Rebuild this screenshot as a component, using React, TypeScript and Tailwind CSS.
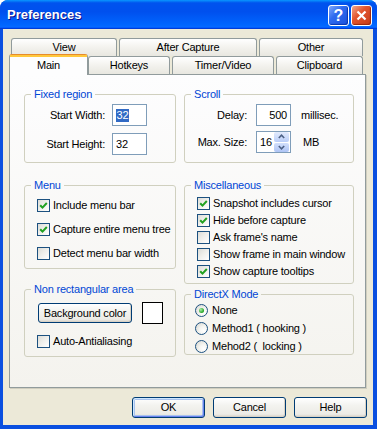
import React from "react";

const Check = ({ on }: { on?: boolean }) => (
  <span className="flex h-[13px] w-[13px] shrink-0 items-center justify-center border border-[#1C5180] bg-[linear-gradient(135deg,#DCDCD7_0%,#EEEEEA_45%,#FFFFFF_100%)]">
    {on && (
      <svg width="9" height="9" viewBox="0 0 9 9">
        <path d="M1.2 4.2 L3.5 6.6 L7.8 2" fill="none" stroke="#21A121" strokeWidth="2" />
      </svg>
    )}
  </span>
);

const CheckRow = ({ on, label }: { on?: boolean; label: string }) => (
  <div className="flex h-[13px] items-center gap-[3px]">
    <Check on={on} />
    <span className="whitespace-pre">{label}</span>
  </div>
);

const Radio = ({ on, label }: { on?: boolean; label: string }) => (
  <div className="flex h-[13px] items-center gap-[4px]">
    <span className="flex h-[13px] w-[13px] shrink-0 items-center justify-center rounded-full border border-[#1C5180] bg-[radial-gradient(circle_at_70%_70%,#FFFFFF_0%,#F4F4F0_40%,#D4D4CE_100%)]">
      {on && (
        <span className="h-[5px] w-[5px] rounded-full bg-[radial-gradient(circle_at_35%_35%,#A8F0A8,#21A121_70%)]" />
      )}
    </span>
    <span className="whitespace-pre">{label}</span>
  </div>
);

const Group = ({
  title,
  className,
  children,
}: {
  title: string;
  className?: string;
  children: React.ReactNode;
}) => (
  <fieldset className={"min-w-0 rounded-[3px] border border-[#D0D0BF] " + (className ?? "")}>
    <legend className="ml-[6px] px-[3px] leading-[13px] text-[#0046D5]">{title}</legend>
    {children}
  </fieldset>
);

const Tab = ({ label, w }: { label: string; w: string }) => (
  <div
    className={
      "flex h-[18px] items-center justify-center rounded-t-[3px] border border-b-0 border-[#919B9C] bg-[linear-gradient(180deg,#FFFFFF,#F4F3EF_45%,#E8E7E0)] " +
      w
    }
  >
    {label}
  </div>
);

const XPButton = ({ label, def, w }: { label: string; def?: boolean; w: string }) => (
  <div
    className={
      "flex items-center justify-center rounded-[3px] border border-[#003C74] bg-[linear-gradient(180deg,#FFFFFF,#F3F3EF_40%,#ECEBE6_85%,#D6D0C5)] " +
      w +
      (def
        ? " shadow-[inset_1px_1px_0_#CEE7FF,inset_-1px_-1px_0_#6982EE,inset_0_0_0_2px_#A9C3EE]"
        : " shadow-[inset_-1px_-1px_0_#D8D2C6]")
    }
  >
    {label}
  </div>
);

const Arrow = ({ up }: { up?: boolean }) => (
  <svg width="7" height="5" viewBox="0 0 7 5">
    <path
      d={up ? "M0.8 4 L3.5 1.2 L6.2 4" : "M0.8 1 L3.5 3.8 L6.2 1"}
      fill="none"
      stroke="#4D6185"
      strokeWidth="1.6"
    />
  </svg>
);

export default function App() {
  return (
    <div className="flex h-[429px] w-[377px] flex-col overflow-hidden rounded-t-[8px] bg-[#0A4FE0] font-['Liberation_Sans',Arial,sans-serif] text-[11px] leading-[13px] tracking-[-0.2px] text-black">
      {/* Title bar */}
      <div className="flex h-[29px] shrink-0 items-center bg-[linear-gradient(180deg,#0997FF,#0053EE_10%,#0050EE_40%,#0066FF_86%,#066AFF_92%,#005BFF_95%,#003DD7_97%,#003DD7)] pl-[7px] pr-[5px]">
        <span className="text-[13px] font-bold tracking-[0px] text-white [text-shadow:1px_1px_0_#0F1089]">
          Preferences
        </span>
        <div className="ml-auto mt-[2px] flex gap-[2px]">
          <div className="flex h-[21px] w-[21px] items-center justify-center rounded-[3px] border border-white bg-[linear-gradient(135deg,#7FA8FA,#2F6BEF_40%,#1A50DC_100%)] shadow-[inset_-1px_-1px_1px_#0A37B0]">
            <span className="text-[16px] font-bold leading-none tracking-[0px] text-white">?</span>
          </div>
          <div className="flex h-[21px] w-[21px] items-center justify-center rounded-[3px] border border-white bg-[linear-gradient(135deg,#F2A88F,#E2552E_40%,#C63A18_100%)] shadow-[inset_-1px_-1px_1px_#9A2A10]">
            <svg width="11" height="11" viewBox="0 0 11 11">
              <path d="M1.5 1.5 L9.5 9.5 M9.5 1.5 L1.5 9.5" stroke="white" strokeWidth="2.2" />
            </svg>
          </div>
        </div>
      </div>

      {/* Body */}
      <div className="mb-[4px] ml-[3px] mr-[4px] flex flex-1 flex-col bg-[#ECE9D8] pl-[6px] pr-[6px] pt-[9px]">
        {/* Tabs row 1 */}
        <div className="ml-[2px] flex gap-[2px]">
          <Tab label="View" w="w-[106px]" />
          <Tab label="After Capture" w="w-[138px]" />
          <Tab label="Other" w="w-[104px]" />
        </div>
        {/* Tabs row 2 */}
        <div className="flex h-[18px] items-end">
          <div className="relative z-10 -mb-[1px] flex h-[21px] w-[79px] flex-col rounded-t-[3px] border-x border-t border-[#919B9C] border-t-[#E68B2C] bg-[#FDFDFE]">
            <div className="h-[2px] bg-[#FFC83C]" />
            <div className="flex flex-1 items-center justify-center pb-[2px]">Main</div>
          </div>
          <div className="flex h-[18px] gap-[2px]">
            <Tab label="Hotkeys" w="w-[82px]" />
            <Tab label="Timer/Video" w="w-[102px]" />
            <Tab label="Clipboard" w="w-[87px]" />
          </div>
        </div>

        {/* Panel */}
        <div className="flex h-[314px] w-[357px] gap-[8px] border border-[#919B9C] bg-[linear-gradient(180deg,#FDFDFE,#F4F3EE)] pl-[14px] pt-[13px] shadow-[1px_1px_0_#D0CEBF]">
          {/* Left column */}
          <div className="flex w-[152px] flex-col">
            <Group title="Fixed region" className="pb-[7px]">
              <div className="flex flex-col gap-[7px] pt-[3px]">
                <div className="flex items-center">
                  <span className="w-[80px] text-right">Start Width:</span>
                  <div className="ml-[7px] flex h-[22px] w-[35px] items-center border border-[#7F9DB9] bg-white pl-[3px]">
                    <span className="bg-[#316AC5] px-[0.5px] text-white">32</span>
                  </div>
                </div>
                <div className="flex items-center">
                  <span className="w-[80px] text-right">Start Height:</span>
                  <div className="ml-[7px] flex h-[22px] w-[35px] items-center border border-[#7F9DB9] bg-white pl-[3px]">
                    32
                  </div>
                </div>
              </div>
            </Group>

            <Group title="Menu" className="mt-[16px] pb-[8px]">
              <div className="flex flex-col gap-[11px] pl-[12px] pt-[7px]">
                <CheckRow on label="Include menu bar" />
                <CheckRow on label="Capture entire menu tree" />
                <CheckRow label="Detect menu bar width" />
              </div>
            </Group>

            <Group title="Non rectangular area" className="mt-[14px] pb-[8px]">
              <div className="pt-[6px]">
                <div className="flex h-[22px] items-center">
                  <XPButton label="Background color" w="ml-[13px] h-[20px] w-[94px]" />
                  <div className="ml-[10px] h-[22px] w-[21px] border border-black bg-white" />
                </div>
                <div className="mt-[11px] pl-[12px]">
                  <CheckRow label="Auto-Antialiasing" />
                </div>
              </div>
            </Group>
          </div>

          {/* Right column */}
          <div className="flex w-[170px] flex-col">
            <Group title="Scroll" className="pb-[9px]">
              <div className="flex flex-col gap-[5px] pt-[3px]">
                <div className="flex items-center">
                  <span className="w-[62px] text-right">Delay:</span>
                  <div className="ml-[9px] flex h-[22px] w-[35px] items-center justify-end border border-[#7F9DB9] bg-white pr-[3px]">
                    500
                  </div>
                  <span className="ml-[10px]">millisec.</span>
                </div>
                <div className="flex items-center">
                  <span className="w-[62px] text-right">Max. Size:</span>
                  <div className="ml-[9px] flex h-[22px] w-[35px] items-center border border-[#7F9DB9] bg-white pl-[3px]">
                    <span>16</span>
                    <div className="ml-auto mr-[1px] flex h-[20px] w-[15px] flex-col gap-[1px]">
                      <div className="flex flex-1 items-center justify-center rounded-[2px] bg-[linear-gradient(180deg,#E3EBFD,#B9CDF8)]">
                        <Arrow up />
                      </div>
                      <div className="flex flex-1 items-center justify-center rounded-[2px] bg-[linear-gradient(180deg,#D2DFFB,#AFC5F6)]">
                        <Arrow />
                      </div>
                    </div>
                  </div>
                  <span className="ml-[12px]">MB</span>
                </div>
              </div>
            </Group>

            <Group title="Miscellaneous" className="mt-[16px] pb-[5px]">
              <div className="flex flex-col gap-[4px] pl-[12px] pt-[5px]">
                <CheckRow on label="Snapshot includes cursor" />
                <CheckRow on label="Hide before capture" />
                <CheckRow label="Ask frame's name" />
                <CheckRow label="Show frame in main window" />
                <CheckRow on label="Show capture tooltips" />
              </div>
            </Group>

            <Group title="DirectX Mode" className="mt-[4px] pb-[1px]">
              <div className="flex flex-col gap-[5px] pl-[10px] pt-[3px]">
                <Radio on label="None" />
                <Radio label="Method1 ( hooking )" />
                <Radio label="Mehod2 (  locking )" />
              </div>
            </Group>
          </div>
        </div>

        {/* Buttons */}
        <div className="mt-[9px] flex justify-end gap-[8px]">
          <XPButton label="OK" def w="h-[21px] w-[73px]" />
          <XPButton label="Cancel" w="h-[21px] w-[73px]" />
          <XPButton label="Help" w="h-[21px] w-[73px]" />
        </div>
      </div>
    </div>
  );
}
